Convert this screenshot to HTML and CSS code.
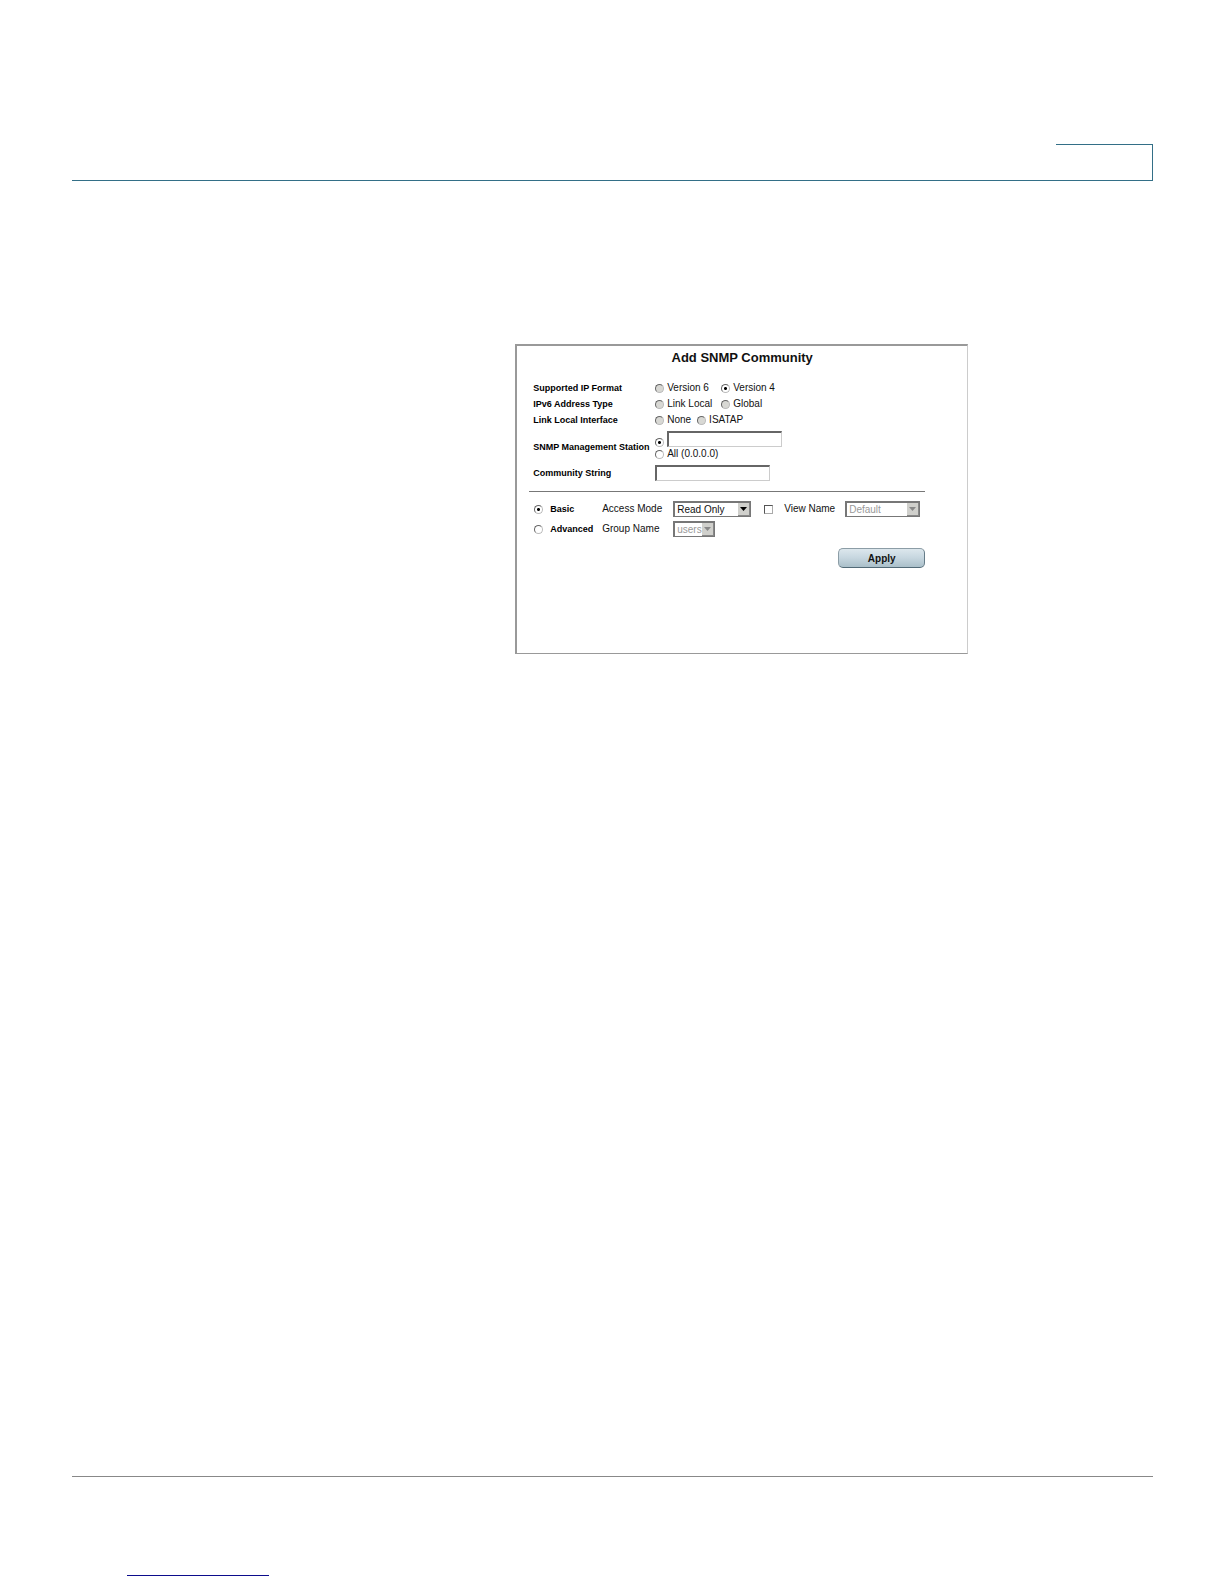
FILE: index.html
```
<!DOCTYPE html>
<html lang="en">
<head>
    <meta charset="UTF-8">
    <meta name="viewport" content="width=device-width, initial-scale=1.0">
    <title>Add SNMP Community</title>
    <link rel="stylesheet" href="styles.css">
</head>
<body>
    <header class="page-header">
        <div class="header-tab"></div>
    </header>

    <main>
        <form class="panel">
            <h1>Add SNMP Community</h1>

            <div class="fields">
                <span class="name" id="ip-format">Supported IP Format</span>
                <div class="options" role="radiogroup" aria-labelledby="ip-format">
                    <label class="wide"><input type="radio" name="format" disabled>Version 6</label>
                    <label><input type="radio" name="format" checked>Version 4</label>
                </div>

                <span class="name" id="address-type">IPv6 Address Type</span>
                <div class="options" role="radiogroup" aria-labelledby="address-type">
                    <label class="wide"><input type="radio" name="type" disabled>Link Local</label>
                    <label><input type="radio" name="type" disabled>Global</label>
                </div>

                <span class="name" id="link-local">Link Local Interface</span>
                <div class="options" role="radiogroup" aria-labelledby="link-local">
                    <label><input type="radio" name="interface" disabled>None</label>
                    <label><input type="radio" name="interface" disabled>ISATAP</label>
                </div>

                <span class="name" id="station">SNMP Management Station</span>
                <div class="station" role="radiogroup" aria-labelledby="station">
                    <div class="station-row">
                        <input type="radio" name="station" aria-label="Station address" checked>
                        <input type="text" aria-labelledby="station">
                    </div>
                    <label><input type="radio" name="station">All (0.0.0.0)</label>
                </div>

                <label class="name" for="community">Community String</label>
                <input type="text" id="community">
            </div>

            <hr>

            <div class="access">
                <label class="mode"><input type="radio" name="mode" checked>Basic</label>
                <label for="access-mode">Access Mode</label>
                <div class="controls">
                    <span class="select select-mode">
                        <select id="access-mode"><option>Read Only</option></select>
                        <svg viewBox="0 0 11 12"><path d="M2 4h7L5.500 8z"/></svg>
                    </span>
                    <input type="checkbox" id="view-check" aria-label="Use view name">
                    <label for="view-name">View Name</label>
                    <span class="select select-view">
                        <select id="view-name" disabled><option>Default</option></select>
                        <svg viewBox="0 0 11 12"><path d="M2 4h7L5.500 8z"/></svg>
                    </span>
                </div>

                <label class="mode"><input type="radio" name="mode">Advanced</label>
                <label for="group-name">Group Name</label>
                <div class="controls">
                    <span class="select select-group">
                        <select id="group-name" disabled><option>users</option></select>
                        <svg viewBox="0 0 11 12"><path d="M2 4h7L5.500 8z"/></svg>
                    </span>
                </div>
            </div>

            <div class="actions">
                <button type="button">Apply</button>
            </div>
        </form>
    </main>

    <footer>
        <a href="#" aria-label="Back to contents"></a>
    </footer>
</body>
</html>
```
FILE: styles.css
```
* {
    box-sizing: border-box;
}

body {
    display: flex;
    flex-direction: column;
    min-height: 100vh;
    margin: 0;
    padding: 144px 71px 8px 72px;
    background-color: #fff;
    color: #111;
    font-family: "Liberation Sans", Arial, sans-serif;
    font-size: 10px;
    line-height: 16px;
}

.page-header {
    display: flex;
    justify-content: flex-end;
    border-bottom: 1px solid #336f87;
}

.header-tab {
    width: 97px;
    height: 36px;
    border-top: 1px solid #336f87;
    border-right: 1px solid #336f87;
}

main {
    padding: 163px 0 40px 41%;
}

.panel {
    max-width: 453px;
    min-height: 310px;
    padding: 4px 42px 80px 12px;
    border: 1px solid #999;
    border-width: 2px 1px 1px 2px;
    border-color: #999 #ccc #999 #999;
}

h1 {
    margin: 0 -30px 14px 0;
    font-size: 13px;
    font-weight: bold;
    line-height: 16px;
    text-align: center;
}

.fields {
    display: grid;
    grid-template-columns: 122px 1fr;
    align-items: center;
    padding-left: 4px;
}

.name,
.mode {
    color: #000;
    font-size: 9px;
    font-weight: bold;
    white-space: nowrap;
}

label {
    white-space: nowrap;
}

.options {
    display: flex;
    gap: 6px;
}

.options label,
.station label,
.station-row,
.mode {
    display: flex;
    align-items: center;
    gap: 3px;
}

.options .wide {
    width: 60px;
}

.station {
    padding: 3px 0 4px;
}

.station .station-row {
    align-items: flex-end;
}

.station label {
    line-height: 14px;
}

input {
    flex: none;
    margin: 0;
}

input[type="radio"] {
    appearance: none;
    width: 9px;
    height: 9px;
    border: 1px solid;
    border-color: #666 #bbb #bbb #666;
    border-radius: 50%;
    background-color: #fff;
}

input[type="radio"]:checked {
    background-image: radial-gradient(circle, #000 1px, #fff 2px);
}

input[type="radio"]:disabled {
    background-color: #d8d8d4;
}

input[type="checkbox"] {
    appearance: none;
    width: 9px;
    height: 9px;
    border: 1px solid;
    border-color: #555 #aaa #aaa #555;
}

input[type="text"] {
    width: 115px;
    height: 16px;
    padding: 0 2px;
    border: 1px solid #ccc;
    border-width: 2px 1px 1px 2px;
    border-color: #666 #ccc #ccc #666;
    font: inherit;
}

hr {
    height: 1px;
    margin: 10px 0 7px;
    border: 0;
    background-color: #777;
}

.access {
    display: grid;
    grid-template-columns: 68px 71px 1fr;
    grid-auto-rows: 20px;
    align-items: center;
    padding-left: 5px;
}

.mode {
    gap: 7px;
}

.controls {
    display: flex;
    align-items: center;
}

.controls label {
    margin: 0 10px 0 11px;
}

.controls input {
    margin-left: 13px;
}

.select {
    display: flex;
    position: relative;
    height: 16px;
}

.select-mode {
    width: 78px;
}

.select-view {
    width: 75px;
}

.select-group {
    width: 42px;
}

select {
    appearance: none;
    width: 100%;
    padding: 0 0 0 2px;
    border: 2px solid #777;
    border-width: 2px 1px 1px 2px;
    border-radius: 0;
    background-color: #fff;
    color: #111;
    font: inherit;
    line-height: 12px;
}

select:disabled {
    color: #999;
    opacity: 1;
}

/* arrow box drawn over the right end of the select */
.select svg {
    position: absolute;
    top: 2px;
    right: 1px;
    width: 12px;
    height: 13px;
    border: 1px solid #888;
    border-width: 0 1px 1px 0;
    background-color: #d0d0cc;
    pointer-events: none;
}

select:disabled + svg {
    fill: #888;
}

.actions {
    display: flex;
    justify-content: flex-end;
    margin-top: 9px;
}

button {
    width: 87px;
    height: 20px;
    padding: 0;
    border: 1px solid #8c9da6;
    border-bottom-color: #526a77;
    border-right-color: #657c88;
    border-radius: 5px;
    background: linear-gradient(#dce7ed, #c6d6df 50%, #aabfc9);
    color: #111;
    font-family: inherit;
    font-size: 10px;
    font-weight: bold;
}

footer {
    margin-top: auto;
    padding: 98px 0 0 55px;
    border-top: 1px solid #888;
}

footer a {
    display: block;
    width: 142px;
    border-bottom: 1px solid #0c0c8c;
}
```
